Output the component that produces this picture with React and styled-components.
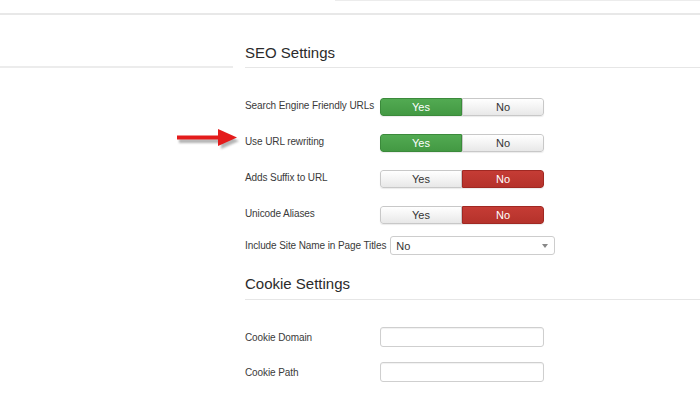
import React from 'react';
import styled, { createGlobalStyle } from 'styled-components';

const GlobalStyle = createGlobalStyle`
  body {
    margin: 0;
    background: #fff;
    font-family: "Liberation Sans", Arial, sans-serif;
    color: #333;
  }
`;

const Page = styled.div`
  width: 700px;
  height: 397px;
  overflow: hidden;
  background: #fff;
`;

const TopStrip = styled.div`
  height: 13px;
  border-bottom: 2px solid #e8e8e8;
  display: flex;
`;

const TopEdge = styled.div`
  margin-left: 335px;
  flex: 1;
  border-top: 1px solid #ececec;
`;

const Body = styled.div`
  display: grid;
  grid-template-columns: 233px 1fr;
  column-gap: 12px;
`;

const Sidebar = styled.div`
  height: 51px;
  border-bottom: 2px solid #ececec;
`;

const Main = styled.div`
  display: flex;
  flex-direction: column;
`;

const Heading = styled.h3`
  margin: ${p => p.$top}px 0 0;
  padding: 0 0 ${p => p.$bottom}px;
  font-size: 15px;
  line-height: 18px;
  font-weight: normal;
  color: #2b2b2b;
  border-bottom: 1px solid #e6e6e6;
`;

const Form = styled.div`
  display: flex;
  flex-direction: column;
  margin-top: ${p => p.$top}px;
`;

const Row = styled.div`
  position: relative;
  display: flex;
  align-items: ${p => (p.$center ? 'center' : 'flex-start')};
  margin-bottom: ${p => p.$gap ?? 18}px;
`;

const Label = styled.label`
  min-width: 131px;
  margin-right: 4px;
  padding-top: ${p => (p.$center ? 0 : 1)}px;
  font-size: 10px;
  letter-spacing: -0.1px;
  line-height: 13px;
  color: #3a3a3a;
  white-space: nowrap;
`;

const Toggle = styled.div`
  display: flex;
  width: 164px;
  height: 18px;
  border-radius: 3px;
  overflow: hidden;
  box-shadow: 0 1px 1px rgba(0, 0, 0, 0.08);
`;

const palette = {
  yes: { bg: 'linear-gradient(#52aa52, #439943)', border: '#3b8a3b', color: '#fff' },
  no: { bg: 'linear-gradient(#c53c35, #b5322b)', border: '#a02822', color: '#fff' },
  off: { bg: 'linear-gradient(#ffffff, #e8e8e8)', border: '#c8c8c8', color: '#333' },
};

const Seg = styled.div`
  flex: 1;
  display: flex;
  align-items: center;
  justify-content: center;
  font-size: 11px;
  color: ${p => palette[p.$kind].color};
  background: ${p => palette[p.$kind].bg};
  border: 1px solid ${p => palette[p.$kind].border};
  &:first-child {
    border-radius: 3px 0 0 3px;
  }
  &:last-child {
    border-radius: 0 3px 3px 0;
  }
`;

const Select = styled.div`
  height: 17px;
  border: 1px solid #cdcdcd;
  border-radius: 3px;
  display: flex;
  align-items: center;
  justify-content: space-between;
  padding: 0 6px 0 5px;
  width: 152px;
  font-size: 11px;
  color: #333;
  background: #fff;
`;

const Caret = styled.span`
  width: 0;
  height: 0;
  border-left: 3px solid transparent;
  border-right: 3px solid transparent;
  border-top: 4px solid #888;
`;

const Input = styled.div`
  width: 162px;
  height: 18px;
  border: 1px solid #cfcfcf;
  border-radius: 3px;
  box-shadow: inset 0 1px 1px rgba(0, 0, 0, 0.06);
  background: #fff;
`;

const Footer = styled.div`
  margin-left: 90px;
  border-top: 1px solid #ececec;
  height: 1px;
`;

const ArrowMark = styled.svg`
  position: absolute;
  left: -70px;
  top: -5px;
  overflow: visible;
`;

function Arrow() {
  return (
    <ArrowMark width="64" height="20" viewBox="0 0 64 20">
      <defs>
        <filter id="sh" x="-20%" y="-50%" width="140%" height="200%">
          <feGaussianBlur stdDeviation="1.3" />
        </filter>
      </defs>
      <g transform="translate(2 3)" fill="#777" opacity="0.55" filter="url(#sh)">
        <rect x="2" y="7" width="46" height="4" />
        <polygon points="44,0 62,9 44,17" />
      </g>
      <rect x="2" y="6.5" width="46" height="4" fill="#e41b1b" />
      <polygon points="43,0 62,8.5 43,17" fill="#e41b1b" />
    </ArrowMark>
  );
}

function Switch({ value }) {
  return (
    <Toggle>
      <Seg $kind={value ? 'yes' : 'off'}>Yes</Seg>
      <Seg $kind={value ? 'off' : 'no'}>No</Seg>
    </Toggle>
  );
}

export default function App() {
  return (
    <Page>
      <GlobalStyle />
      <TopStrip>
        <TopEdge />
      </TopStrip>
      <Body>
        <Sidebar />
        <Main>
          <Heading $top={29} $bottom={5}>SEO Settings</Heading>
          <Form $top={30}>
            <Row>
              <Label>Search Engine Friendly URLs</Label>
              <Switch value />
            </Row>
            <Row>
              <Arrow />
              <Label>Use URL rewriting</Label>
              <Switch value />
            </Row>
            <Row>
              <Label>Adds Suffix to URL</Label>
              <Switch value={false} />
            </Row>
            <Row $gap={12}>
              <Label>Unicode Aliases</Label>
              <Switch value={false} />
            </Row>
            <Row $center $gap={0}>
              <Label $center>Include Site Name in Page Titles</Label>
              <Select>
                No
                <Caret />
              </Select>
            </Row>
          </Form>
          <Heading $top={20} $bottom={6}>Cookie Settings</Heading>
          <Form $top={27}>
            <Row $center $gap={15}>
              <Label $center>Cookie Domain</Label>
              <Input />
            </Row>
            <Row $center $gap={15}>
              <Label $center>Cookie Path</Label>
              <Input />
            </Row>
          </Form>
          <Footer />
        </Main>
      </Body>
    </Page>
  );
}
